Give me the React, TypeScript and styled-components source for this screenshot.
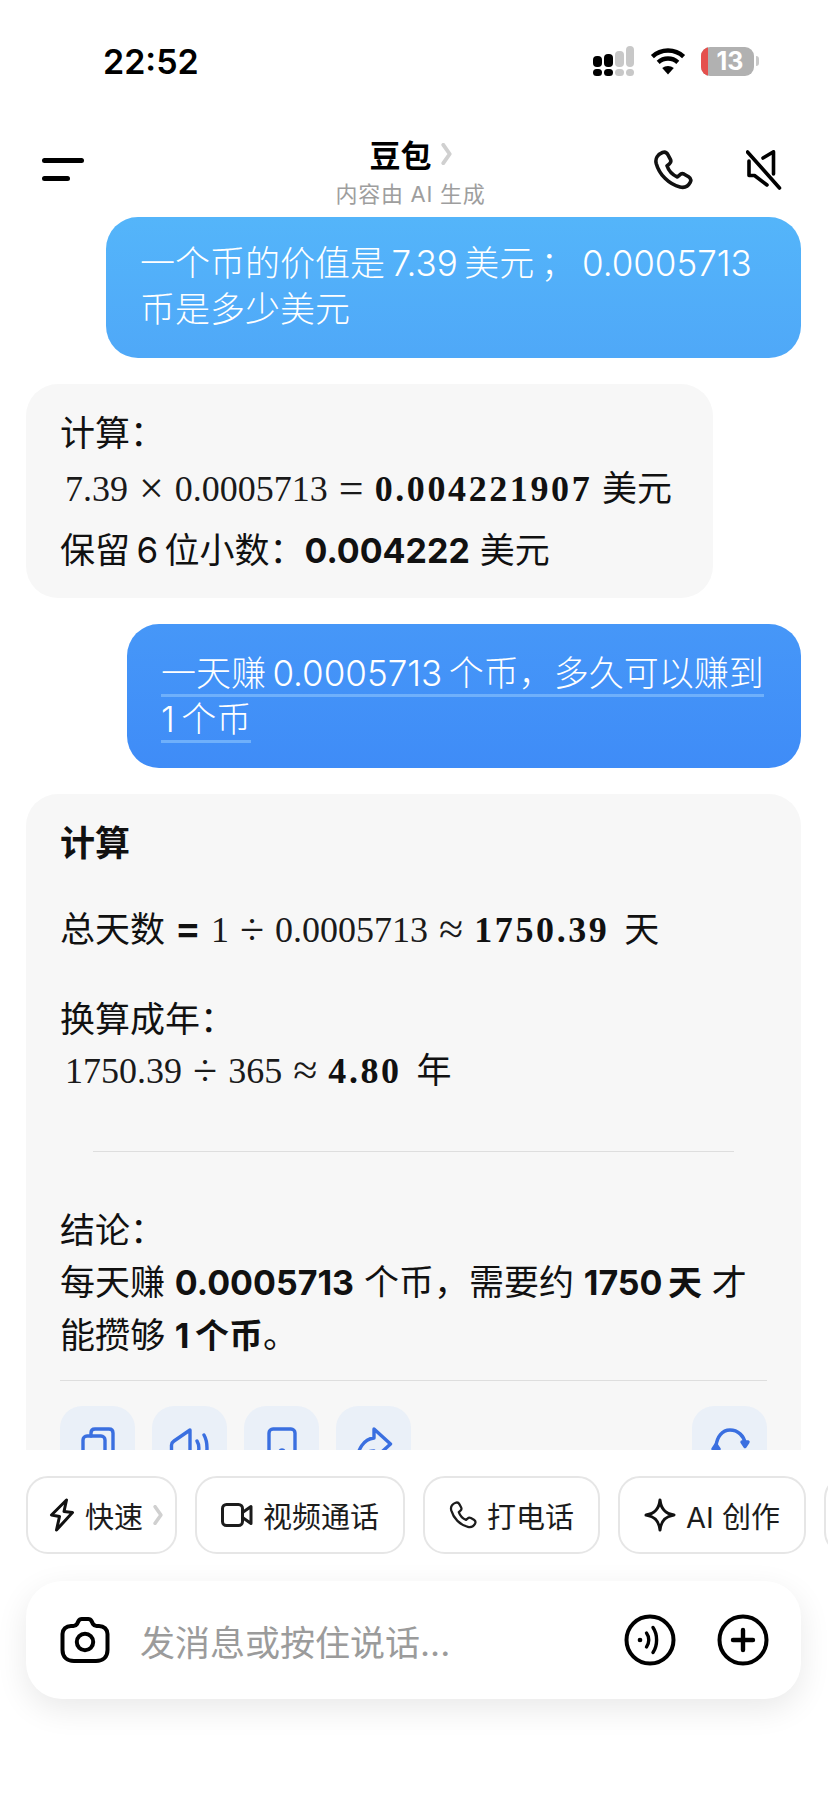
import styled, { createGlobalStyle } from 'styled-components';

const GlobalStyle = createGlobalStyle`
  html, body { margin: 0; padding: 0; background: #fff; }
  * { box-sizing: border-box; }
`;

const Screen = styled.div`
  width: 828px;
  height: 1796px;
  display: flex;
  flex-direction: column;
  overflow: hidden;
  background: #fff;
  color: #111;
  font-family: Inter, "Noto Sans CJK SC", sans-serif;
`;

/* ---- status bar ---- */
const StatusBar = styled.div`
  height: 122px;
  flex-shrink: 0;
  display: flex;
  align-items: center;
  justify-content: space-between;
  padding: 0 69px 0 103px;
`;
const Clock = styled.span`
  font-size: 34px;
  font-weight: 600;
  color: #000;
`;
const StatusIcons = styled.div`
  display: flex;
  align-items: center;
  gap: 15px;
`;
const Battery = styled.div`
  position: relative;
  width: 53px;
  height: 29px;
  border-radius: 9px;
  overflow: hidden;
  background: #b1b1b1;
  color: #fff;
  font-size: 25px;
  font-weight: 700;
  display: flex;
  align-items: center;
  justify-content: center;
  padding-left: 5px;
  &::before {
    content: "";
    position: absolute;
    left: 0;
    top: 0;
    bottom: 0;
    width: 7px;
    background: #e5504d;
  }
`;
const BatteryWrap = styled.div`
  display: flex;
  align-items: center;
  gap: 2px;
  &::after {
    content: "";
    width: 3px;
    height: 10px;
    border-radius: 0 3px 3px 0;
    background: #c9c9c9;
  }
`;

/* ---- header ---- */
const Header = styled.header`
  height: 95px;
  flex-shrink: 0;
  display: grid;
  grid-template-columns: 1fr auto 1fr;
  align-items: center;
  padding: 0 46px 0 42px;
`;
const MenuIcon = styled.div`
  display: flex;
  flex-direction: column;
  gap: 13px;
  &::before, &::after {
    content: "";
    height: 5px;
    border-radius: 3px;
    background: #000;
  }
  &::before { width: 42px; }
  &::after { width: 28px; }
`;
const TitleBlock = styled.div`
  display: flex;
  flex-direction: column;
  align-items: center;
  gap: 8px;
`;
const TitleRow = styled.div`
  display: flex;
  align-items: center;
  gap: 10px;
  height: 40px;
  font-size: 31px;
  font-weight: 700;
  color: #000;
  margin-left: -2px;
`;
const Subtitle = styled.div`
  font-size: 22px;
  letter-spacing: 0.7px;
  line-height: 24px;
  color: #9e9e9e;
  margin-left: -3px;
`;
const HeaderActions = styled.div`
  display: flex;
  justify-content: flex-end;
  align-items: center;
  gap: 53px;
`;

/* ---- chat ---- */
const Chat = styled.main`
  flex: 1;
  min-height: 0;
  overflow: hidden;
  display: flex;
  flex-direction: column;
  gap: 26px;
  padding: 0 27px 0 26px;
`;
const UserBubble = styled.div<{ $tone: string; $width: number; $top: number }>`
  flex-shrink: 0;
  align-self: flex-end;
  width: ${(p) => p.$width}px;
  padding: ${(p) => p.$top}px 32px 26px 34px;
  border-radius: 32px;
  background: ${(p) => p.$tone};
  color: #fff;
  font-size: 35px;
  font-weight: 300;
  line-height: 46px;
`;
const Underlined = styled.span`
  padding-bottom: 0;
  border-bottom: 3px solid #6fb0fb;
`;
const BotBubble = styled.div<{ $width?: number }>`
  flex-shrink: 0;
  width: ${(p) => (p.$width ? `${p.$width}px` : '100%')};
  padding: 26px 34px 24px;
  border-radius: 32px;
  background: #f7f7f7;
`;
const Line = styled.p<{ $top?: number; $height?: number }>`
  margin: ${(p) => p.$top ?? 0}px 0 0;
  font-size: 35px;
  font-weight: 400;
  line-height: ${(p) => p.$height ?? 46}px;
  white-space: pre-wrap;
`;
const Strong = styled.span`
  font-weight: 700;
  font-size: 34px;
`;
const Heading = styled.span`
  font-weight: 700;
`;
const Math = styled.span`
  font-family: "Liberation Serif", serif;
  font-size: 36px;
  word-spacing: 2px;
  color: #1a1a1a;
`;
const Op = styled.span`
  font-size: 44px;
  line-height: 0;
  vertical-align: -2px;
`;
const Equals = styled.span`
  font-size: 39px;
  font-weight: 600;
`;
const MathStrong = styled.span`
  font-family: "Liberation Serif", serif;
  font-size: 36px;
  font-weight: 700;
  letter-spacing: 2.6px;
`;
const Unit = styled.span`
  margin-left: 5px;
`;
const MathLine = styled(Line)`
  height: 64px;
  line-height: 64px;
  padding-left: 5px;
`;
const Divider = styled.hr<{ $inset: number; $top: number }>`
  border: 0;
  height: 1px;
  background: #dedede;
  margin: ${(p) => p.$top}px ${(p) => p.$inset}px 0;
`;
const ActionRow = styled.div`
  display: flex;
  gap: 17px;
  margin-top: 25px;
`;
const ActionButton = styled.button<{ $push?: boolean }>`
  width: 75px;
  height: 75px;
  flex-shrink: 0;
  border: 0;
  padding: 21px 0 0;
  border-radius: 22px;
  background: #eaf0f8;
  display: flex;
  justify-content: center;
  align-items: flex-start;
  margin-left: ${(p) => (p.$push ? 'auto' : '0')};
`;

/* ---- bottom ---- */
const Dock = styled.footer`
  height: 346px;
  flex-shrink: 0;
  padding: 26px 0 0 26px;
  background: #fff;
  display: flex;
  flex-direction: column;
  gap: 27px;
  position: relative;
`;
const ChipRow = styled.div`
  display: flex;
  gap: 18px;
  overflow: hidden;
`;
const Chip = styled.div<{ $compact?: boolean }>`
  flex-shrink: 0;
  height: 78px;
  min-width: 30px;
  padding: ${(p) => (p.$compact ? '0 12px 0 21px' : '0 24px')};
  border: 2px solid #e6e6e6;
  border-radius: 22px;
  display: flex;
  align-items: center;
  gap: 10px;
  font-size: 29px;
  color: #1c1c1c;
`;
const InputBar = styled.div`
  width: 775px;
  height: 118px;
  padding: 0 32px 0 34px;
  border-radius: 36px;
  background: #fff;
  box-shadow: 0 10px 32px rgba(0, 0, 0, 0.09);
  display: flex;
  align-items: center;
  gap: 30px;
`;
const Placeholder = styled.span`
  flex: 1;
  font-size: 35px;
  color: #9b9b9b;
`;
const InputActions = styled.div`
  display: flex;
  gap: 41px;
`;

const iconProps = {
  fill: 'none',
  stroke: 'currentColor',
  strokeLinecap: 'round' as const,
  strokeLinejoin: 'round' as const,
};

const SignalIcon = () => (
  <svg width="42" height="30" viewBox="0 0 42 30">
    <rect x="0" y="10" width="9" height="11" rx="4" fill="#000" />
    <rect x="11" y="8" width="9" height="13" rx="4" fill="#000" />
    <rect x="22" y="5" width="9" height="16" rx="4" fill="#c8c8c8" />
    <rect x="33" y="0" width="8" height="21" rx="4" fill="#c8c8c8" />
    <rect x="0" y="23" width="9" height="7" rx="3.5" fill="#000" />
    <rect x="11" y="23" width="9" height="7" rx="3.5" fill="#000" />
    <rect x="22" y="23" width="9" height="7" rx="3.5" fill="#c8c8c8" />
    <rect x="33" y="23" width="8" height="7" rx="3.5" fill="#c8c8c8" />
  </svg>
);

const WifiIcon = () => (
  <svg width="36" height="28" viewBox="0 0 36 28" {...iconProps} stroke="#000" strokeWidth="4.4" strokeLinecap="butt">
    <path d="M2.4 9.6 C11 1.4 25 1.4 33.6 9.6" />
    <path d="M8.2 15.4 C13.8 10.2 22.2 10.2 27.8 15.4" />
    <path d="M18 27.5 L12.2 21 C15.6 18.2 20.4 18.2 23.8 21 Z" fill="#000" stroke="none" />
  </svg>
);

const Chevron = ({ size = 22 }: { size?: number }) => (
  <svg width={size / 2} height={size} viewBox="0 0 12 24" {...iconProps} stroke="#d0d0d0" strokeWidth="4.2">
    <path d="M2.5 2 L9.5 12 L2.5 22" />
  </svg>
);

const PhoneIcon = ({ size }: { size: number }) => (
  <svg width={size} height={size} viewBox="0 0 40 40" {...iconProps} strokeWidth={size > 35 ? 3.6 : 3.2}>
    <path d="M9.5 2.5 C12 1.6 13.8 2.6 15 4.8 L17.4 9.4 C18.2 11 17.8 12.6 16.4 13.8 L14 15.8 C15.6 20.6 19.6 25 24.4 27 L26.8 24.8 C28 23.6 29.6 23.4 31.2 24.2 L35.6 26.8 C37.8 28.2 38.4 30.2 37.2 32.4 C35 36.6 31.4 38 27 37 C15.6 34.2 6.4 24.6 3.2 13.4 C2 8.6 4.6 4.4 9.5 2.5 Z" />
  </svg>
);

const MuteIcon = () => (
  <svg width="36" height="40" viewBox="0 0 36 40" {...iconProps} stroke="#000" strokeWidth="3.6">
    <path d="M17 8 L27.5 1.8 V24" />
    <path d="M3 11 V25.5 H8.5 L21 35" />
    <path d="M1.5 2 L33.5 38" />
  </svg>
);

const BoltIcon = () => (
  <svg width="26" height="34" viewBox="0 0 26 34" {...iconProps} stroke="#111" strokeWidth="3">
    <path d="M17.5 2 L2.5 17 L10.5 18.5 L7.5 32 L23.5 14.5 L15 13.5 Z" />
  </svg>
);

const VideoIcon = () => (
  <svg width="32" height="28" viewBox="0 0 32 28" {...iconProps} strokeWidth="3">
    <rect x="1.5" y="3.5" width="20" height="21" rx="4" />
    <path d="M21.5 11.5 L30 5.5 V22.5 L21.5 16.5" />
  </svg>
);

const SparkleIcon = () => (
  <svg width="32" height="34" viewBox="0 0 32 34" {...iconProps} stroke="#111" strokeWidth="3">
    <path d="M16 2 C17 11 21 15.5 30 17 C21 18.5 17 23 16 32 C15 23 11 18.5 2 17 C11 15.5 15 11 16 2 Z" />
  </svg>
);

const CameraIcon = () => (
  <svg width="50" height="46" viewBox="0 0 50 46" {...iconProps} stroke="#000" strokeWidth="4">
    <path d="M17 7 L18.5 4 C19.2 2.6 20.2 2 21.8 2 H28.2 C29.8 2 30.8 2.6 31.5 4 L33 7 C34 8.4 35 9 36.5 9 H39 C44 9 47.5 12.5 47.5 17 V33 C47.5 40 43 44 36 44 H14 C7 44 2.5 40 2.5 33 V17 C2.5 12.5 6 9 11 9 H13.5 C15 9 16 8.4 17 7 Z" />
    <circle cx="25" cy="25" r="8.2" />
  </svg>
);

const VoiceIcon = () => (
  <svg width="52" height="52" viewBox="0 0 52 52" {...iconProps} stroke="#000" strokeWidth="4">
    <circle cx="26" cy="26" r="23.5" />
    <circle cx="16" cy="26" r="1.6" fill="#000" strokeWidth="1.5" />
    <path d="M22.5 19 C25.5 23 25.5 29 22.5 33" strokeWidth="3.4" />
    <path d="M29 13.5 C33.8 20.5 33.8 31.5 29 38.5" strokeWidth="3.4" />
  </svg>
);

const PlusIcon = () => (
  <svg width="52" height="52" viewBox="0 0 52 52" {...iconProps} stroke="#000" strokeWidth="4">
    <circle cx="26" cy="26" r="23.5" />
    <path d="M26 16 V36 M16 26 H36" strokeWidth="4.4" />
  </svg>
);

const actionIcon = { ...iconProps, stroke: '#3a6fe0', strokeWidth: 3.4 };

const CopyIcon = () => (
  <svg width="36" height="42" viewBox="0 0 36 42" {...actionIcon}>
    <path d="M11 9 V6 C11 3.5 12.5 2 15 2 H29 C31.5 2 33 3.5 33 6 V30 C33 32.5 31.5 34 29 34 H25" />
    <rect x="3" y="9" width="22" height="32" rx="4" />
  </svg>
);

const SpeakerIcon = () => (
  <svg width="42" height="42" viewBox="0 0 42 42" {...actionIcon}>
    <path d="M21 3 L5 14 C3 15.4 2.5 16.5 2.5 18 V24 C2.5 25.5 3 26.6 5 28 L21 39 Z" />
    <path d="M28 14 C30.5 18 30.5 24 28 28" />
    <path d="M35 8 C39 15 39 27 35 34" />
  </svg>
);

const SaveIcon = () => (
  <svg width="30" height="46" viewBox="0 0 30 46" {...actionIcon}>
    <rect x="2" y="2" width="26" height="42" rx="4" />
    <circle cx="15" cy="25" r="2" fill="#3a6fe0" />
  </svg>
);

const ShareIcon = () => (
  <svg width="38" height="42" viewBox="0 0 38 42" {...actionIcon}>
    <path d="M19 2 L35.5 17 L19 32 V24 C12 24 6 27 2 36 C2 22 9 12 19 11 Z" />
  </svg>
);

const RedoIcon = () => (
  <svg width="42" height="42" viewBox="0 0 42 42" {...actionIcon}>
    <path d="M7 19 C8 10 13 3 21 3 C29 3 35 9 36 16" />
    <path d="M33 15 L36 19.5 L39 15 Z" fill="#3a6fe0" />
    <path d="M36 27 C34 34 28 39 21 39 C14 39 9 34 7 28" />
    <path d="M4 22 L7 17.5 L10 22 Z" fill="#3a6fe0" />
  </svg>
);

export default function App() {
  return (
    <Screen>
      <GlobalStyle />
      <StatusBar>
        <Clock>22:52</Clock>
        <StatusIcons>
          <SignalIcon />
          <WifiIcon />
          <BatteryWrap>
            <Battery>13</Battery>
          </BatteryWrap>
        </StatusIcons>
      </StatusBar>

      <Header>
        <MenuIcon />
        <TitleBlock>
          <TitleRow>
            豆包
            <Chevron />
          </TitleRow>
          <Subtitle>内容由 AI 生成</Subtitle>
        </TitleBlock>
        <HeaderActions>
          <PhoneIcon size={40} />
          <MuteIcon />
        </HeaderActions>
      </Header>

      <Chat>
        <UserBubble $tone="linear-gradient(#54b5fa, #4fa8f8)" $width={695} $top={23}>
          一个币的价值是{'\u2009'}7.39{'\u2009'}美元{'\u2009'}；{'\u2009'}0.0005713 币是多少美元
        </UserBubble>

        <BotBubble $width={687}>
          <Line>计算：</Line>
          <MathLine>
            <Math>7.39 <Op>×</Op> 0.0005713 <Op>=</Op> </Math>
            <MathStrong>0.004221907</MathStrong> 美元
          </MathLine>
          <Line $top={7}>
            保留{'\u2009'}6{'\u2009'}位小数：<Strong>0.004222</Strong> 美元
          </Line>
        </BotBubble>

        <UserBubble $tone="linear-gradient(#4697f8, #3f8cf7)" $width={674} $top={26}>
          <Underlined>一天赚{'\u2009'}0.0005713{'\u2009'}个币，多久可以赚到</Underlined>{' '}
          <Underlined>1{'\u2009'}个币</Underlined>
        </UserBubble>

        <BotBubble>
          <Line>
            <Heading>计算</Heading>
          </Line>
          <Line $top={39}>
            总天数 <Equals>=</Equals> <Math>1 <Op>÷</Op> 0.0005713 <Op>≈</Op> </Math>
            <MathStrong>1750.39</MathStrong> <Unit>天</Unit>
          </Line>
          <Line $top={43}>换算成年：</Line>
          <MathLine $top={-4}>
            <Math>1750.39 <Op>÷</Op> 365 <Op>≈</Op> </Math>
            <MathStrong>4.80</MathStrong> <Unit>年</Unit>
          </MathLine>
          <Divider $inset={33} $top={49} />
          <Line $top={52} $height={52}>结论：</Line>
          <Line $height={52}>
            每天赚 <Strong>0.0005713</Strong> 个币，需要约 <Strong>1750{'\u2009'}天</Strong> 才能攒够 <Strong>1{'\u2009'}个币</Strong>。
          </Line>
          <Divider $inset={0} $top={18} />
          <ActionRow>
            <ActionButton><CopyIcon /></ActionButton>
            <ActionButton><SpeakerIcon /></ActionButton>
            <ActionButton><SaveIcon /></ActionButton>
            <ActionButton><ShareIcon /></ActionButton>
            <ActionButton $push><RedoIcon /></ActionButton>
          </ActionRow>
        </BotBubble>
      </Chat>

      <Dock>
        <ChipRow>
          <Chip $compact>
            <BoltIcon />
            快速
            <Chevron size={20} />
          </Chip>
          <Chip><VideoIcon />视频通话</Chip>
          <Chip><PhoneIcon size={28} />打电话</Chip>
          <Chip><SparkleIcon />AI 创作</Chip>
          <Chip />
        </ChipRow>
        <InputBar>
          <CameraIcon />
          <Placeholder>发消息或按住说话...</Placeholder>
          <InputActions>
            <VoiceIcon />
            <PlusIcon />
          </InputActions>
        </InputBar>
      </Dock>
    </Screen>
  );
}
